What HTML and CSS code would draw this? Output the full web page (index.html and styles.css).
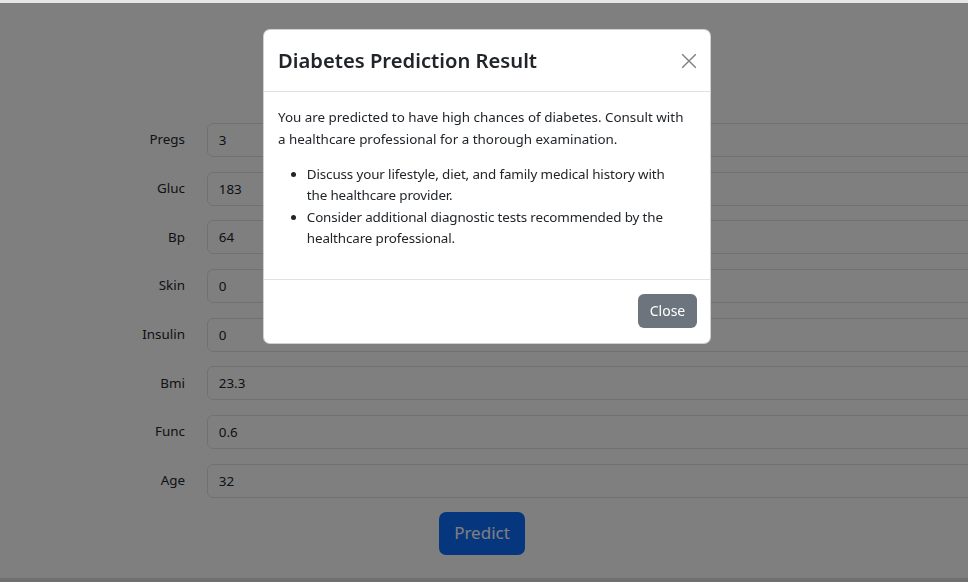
FILE: index.html
```html
<!DOCTYPE html>
<html>
<head>
<meta charset="utf-8">
<link rel="stylesheet" href="styles.css">
</head>
<body>
<div class="topstrip"></div>
<main class="page">
  <form class="form">
    <div class="row"><label class="lbl">Pregs</label><input class="inp" value="3"></div>
    <div class="row"><label class="lbl">Gluc</label><input class="inp" value="183"></div>
    <div class="row"><label class="lbl">Bp</label><input class="inp" value="64"></div>
    <div class="row"><label class="lbl">Skin</label><input class="inp" value="0"></div>
    <div class="row"><label class="lbl">Insulin</label><input class="inp" value="0"></div>
    <div class="row"><label class="lbl">Bmi</label><input class="inp" value="23.3"></div>
    <div class="row"><label class="lbl">Func</label><input class="inp" value="0.6"></div>
    <div class="row"><label class="lbl">Age</label><input class="inp" value="32"></div>
    <div class="actions"><button type="button" class="predict">Predict</button></div>
  </form>
</main>
<div class="bottomstrip"></div>

<div class="backdrop"></div>
<div class="modal">
  <div class="modal-header">
    <h4 class="modal-title">Diabetes Prediction Result</h4>
    <span class="btn-close">
      <svg width="16" height="16" viewBox="0 0 16 16"><path d="M1.2 1.2 L14.8 14.8 M14.8 1.2 L1.2 14.8" stroke="#000" stroke-width="1.4" fill="none"/></svg>
    </span>
  </div>
  <div class="modal-body">
    <p>You are predicted to have high chances of diabetes. Consult with a healthcare professional for a thorough examination.</p>
    <ul>
      <li>Discuss your lifestyle, diet, and family medical history with the healthcare provider.</li>
      <li>Consider additional diagnostic tests recommended by the healthcare professional.</li>
    </ul>
  </div>
  <div class="modal-footer">
    <button type="button" class="btn-secondary">Close</button>
  </div>
</div>
</body>
</html>
```
FILE: styles.css
```css
* { box-sizing: border-box; }
html, body {
  margin: 0;
  padding: 0;
  height: 582px;
  overflow: hidden;
}
body {
  background: #fff;
  font-family: "Noto Sans", "Open Sans", sans-serif;
  font-size: 13.4px;
  line-height: 21.6px;
  color: #212529;
  display: flex;
  flex-direction: column;
}
.topstrip { height: 3px; background: #e6e6e6; flex: none; }
.page { flex: 1; padding-top: 120px; }
.bottomstrip { height: 4px; background: #dedede; flex: none; }

.form { display: flex; flex-direction: column; gap: 14.7px; }
.row { display: flex; align-items: center; }
.lbl {
  width: 185px;
  text-align: right;
  margin-right: 22px;
  flex: none;
}
.inp {
  width: 800px;
  flex: none;
  height: 34px;
  border: 1px solid #dee2e6;
  border-radius: 6px;
  padding: 0 10.8px;
  font: inherit;
  color: #212529;
  background: #fff;
}
.actions { display: flex; justify-content: center; margin-top: -1px; }
.predict {
  width: 86px;
  height: 43px;
  border: none;
  border-radius: 7px;
  background: #0d6efd;
  color: #fff;
  font: inherit;
  font-size: 17px;
  margin-left: -4px;
}

.backdrop {
  position: fixed;
  left: 0;
  right: 0;
  top: 3px;
  bottom: 0;
  background: rgba(0,0,0,0.5);
}
.modal {
  position: absolute;
  left: 263px;
  top: 29px;
  width: 448px;
  background: #fff;
  border-radius: 7px;
  border: 1px solid rgba(0,0,0,0.18);
  overflow: hidden;
}
.modal-header {
  height: 62px;
  display: flex;
  align-items: center;
  justify-content: space-between;
  padding: 0 13px 0 14px;
  border-bottom: 1px solid #dee2e6;
}
.modal-title {
  margin: 0;
  font-size: 20.2px;
  font-weight: 600;
  line-height: 1.2;
}
.btn-close {
  display: flex;
  opacity: 0.5;
}
.modal-body {
  padding: 15.4px 14px 14px;
  height: 188px;
  border-bottom: 1px solid #dee2e6;
}
.modal-body p { margin: 0 0 13px; max-width: 410px; }
.modal-body ul { margin: 0; padding-left: 28.8px; max-width: 400px; }
.modal-body li { letter-spacing: -0.12px; }
.modal-footer {
  display: flex;
  justify-content: flex-end;
  padding: 14px 13px 15px;
}
.btn-secondary {
  height: 34px;
  width: 59px;
  border: none;
  border-radius: 6px;
  background: #6c757d;
  color: #fff;
  font: inherit;
  font-size: 14px;
  padding: 0;
}
```
